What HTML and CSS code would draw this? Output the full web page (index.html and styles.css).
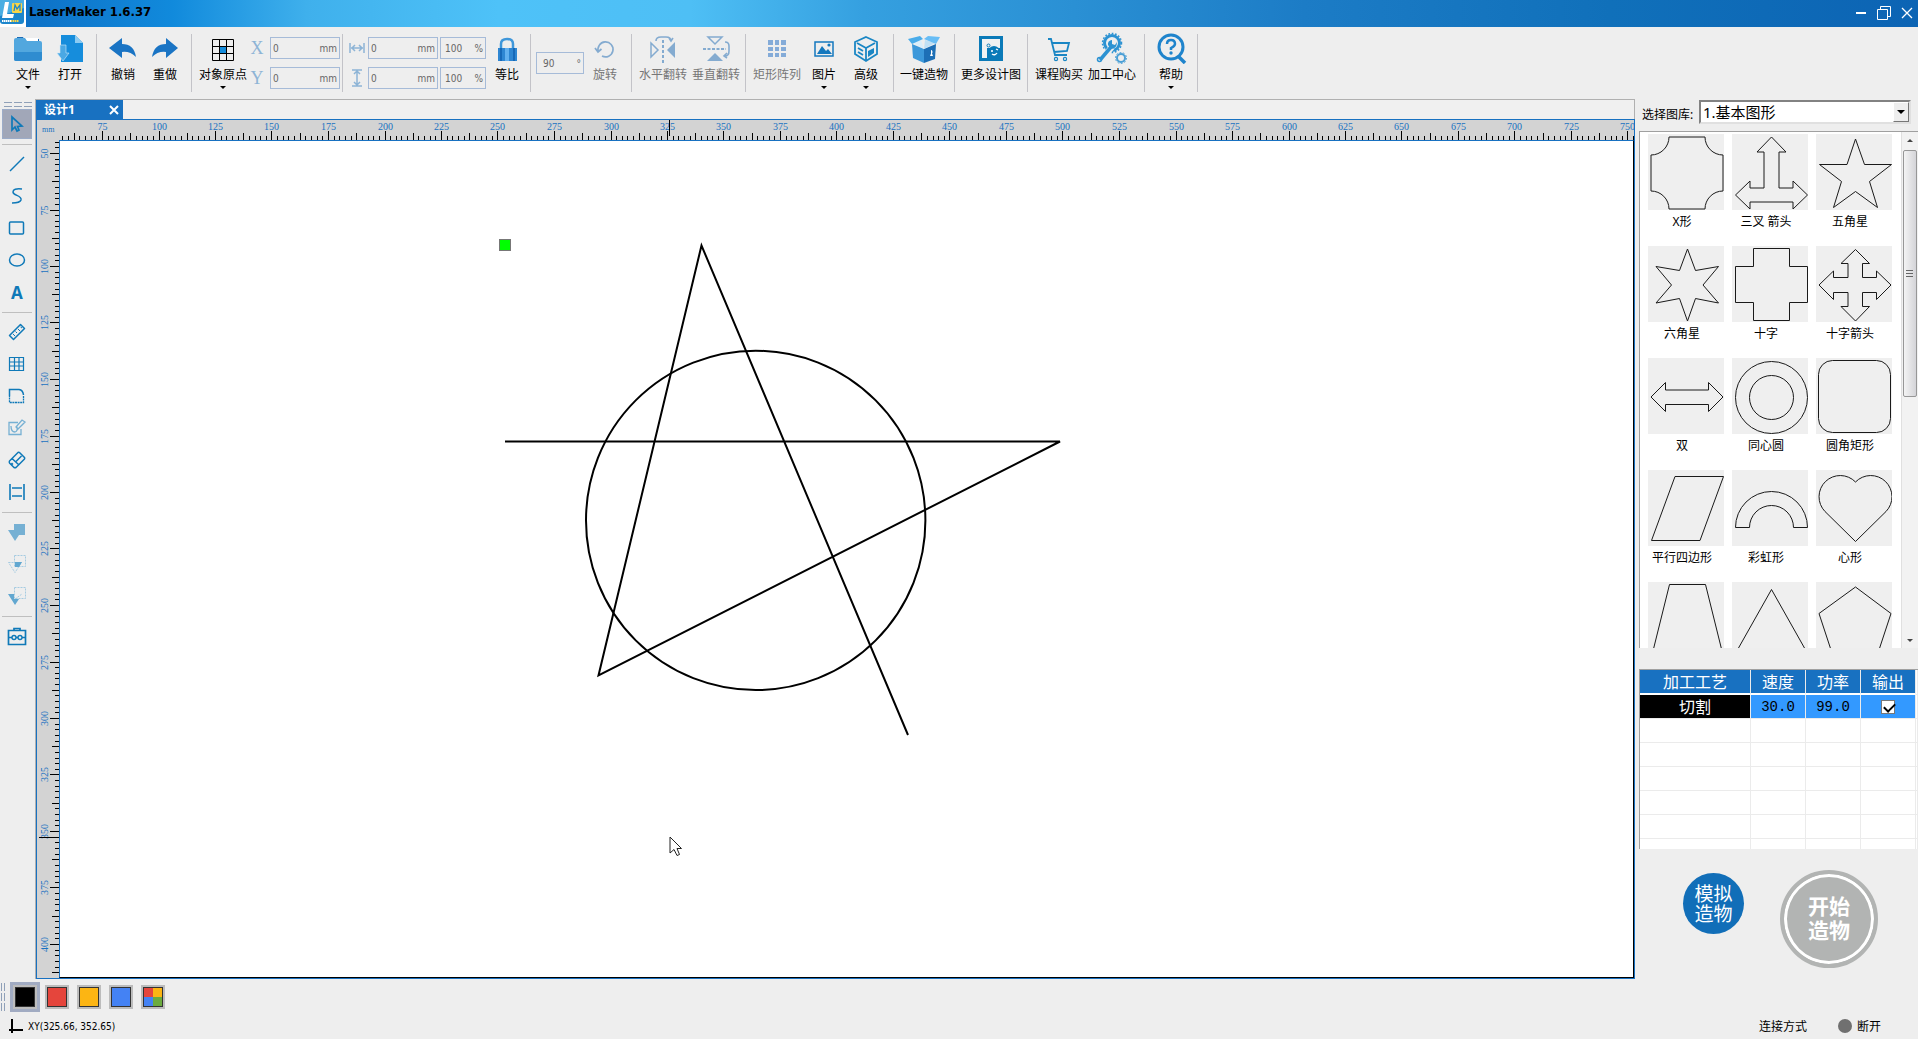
FILE: index.html
```html
<!DOCTYPE html>
<html lang="zh-CN">
<head>
  <meta charset="UTF-8">
  <meta name="viewport" content="width=device-width, initial-scale=1.0">
  <title>LaserMaker 1.6.37</title>
  <link rel="stylesheet" href="styles.css">
</head>
<body>

<!-- Title bar -->
<header class="title-bar">
  <svg class="app-logo" width="26" height="27" viewBox="0 0 26 27">
    <rect width="26" height="27" fill="#fff"/>
    <rect x="0" y="0" width="24" height="24" rx="3" fill="#1c86cc"/>
    <path d="M0 0H24V8L0 16Z" fill="#4aaee2"/>
    <path d="M5 2H9L7 14H14L13 18H2Z" fill="#fff"/>
    <rect x="12" y="3" width="10" height="10" rx="1" fill="#f8d548"/>
    <path d="M14 11L15 5L17 9L20 5V11" fill="none" stroke="#1c86cc" stroke-width="1.3"/>
    <path d="M2 21H11" stroke="#fff" stroke-width="2" stroke-dasharray="1.5 .5"/>
    <path d="M11 21H19" stroke="#f8d548" stroke-width="2" stroke-dasharray="1.5 .5"/>
  </svg>
  <h1 class="app-title">LaserMaker 1.6.37</h1>
  <div class="window-buttons">
    <button class="window-button" aria-label="最小化"><svg width="16" height="16" viewBox="0 0 16 16"><path d="M3 8H13" stroke="#fff" stroke-width="2"/></svg></button>
    <button class="window-button" aria-label="还原"><svg width="16" height="16" viewBox="0 0 16 16"><path d="M1.500 4.500H11.500V14.500H1.500ZM4.500 4V1.500H14.500V11.500H12" fill="none" stroke="#fff"/></svg></button>
    <button class="window-button" aria-label="关闭"><svg width="16" height="16" viewBox="0 0 16 16"><path d="M3 3L13 13M13 3L3 13" stroke="#fff" stroke-width="1.300"/></svg></button>
  </div>
</header>

<!-- Main toolbar -->
<div class="toolbar">
  <div class="group group-file">
    <button class="tool">
      <svg class="tool-icon" viewBox="0 0 32 32"><path d="M5 5H11L12 7H27V14H5Z" fill="#1a6cb8"/><path d="M13 6H26V12H14Z" fill="#fff"/><path d="M2 8Q2 6 4 6H13L15 9H28Q30 9 30 11V27Q30 29 28 29H4Q2 29 2 27Z" fill="#52a7de"/><path d="M2 20H30V27Q30 29 28 29H4Q2 29 2 27Z" fill="#2f8cd0"/></svg>
      <span>文件</span><i class="caret"></i>
    </button>
    <button class="tool">
      <svg class="tool-icon" viewBox="0 0 32 32"><path d="M7 3H21L29 11V30H7Z" fill="#168ddc"/><path d="M21 3L29 11H21Z" fill="#8bcbf2"/><path d="M6 13H12V21H15L9 29L3 21H6Z" fill="#4aa8e4" stroke="#cfe8f8" stroke-width=".6"/></svg>
      <span>打开</span>
    </button>
  </div>
  <div class="group">
    <button class="tool">
      <svg class="tool-icon" viewBox="0 0 32 32"><path d="M2 16L15 6V12Q27 12 29 25Q23 19 15 20V26Z" fill="#1a74c4"/></svg>
      <span>撤销</span>
    </button>
    <button class="tool">
      <svg class="tool-icon" viewBox="0 0 32 32"><path d="M29 16L17 6V12Q5 12 3 25Q9 19 17 20V26Z" fill="#1a74c4"/></svg>
      <span>重做</span>
    </button>
  </div>
  <div class="group group-origin">
    <button class="tool tool-wide">
      <svg class="tool-icon" viewBox="0 0 32 32"><path d="M13 14H20V21H13Z" fill="#168ddc"/><path d="M5.500 7.500H26.500V28.500H5.500ZM12.500 7V29M19.500 7V29M5 14.500H27M5 21.500H27" fill="none" stroke="#000"/></svg>
      <span>对象原点</span><i class="caret"></i>
    </button>
    <div class="fields">
      <label class="axis" for="posX">X</label>
      <div class="field"><input id="posX" type="text" value="0"><span>mm</span></div>
      <label class="axis" for="posY">Y</label>
      <div class="field"><input id="posY" type="text" value="0"><span>mm</span></div>
    </div>
  </div>
  <div class="group group-size">
    <div class="fields fields-size">
      <label class="axis" for="sizeW" aria-label="宽"><svg width="16" height="12" viewBox="0 0 16 12"><path d="M1 1V11M15 1V11M2 6H14M6 3L3 6L6 9M10 3L13 6L10 9" fill="none" stroke="#8db4d6" stroke-width="1.500"/></svg></label>
      <div class="field"><input id="sizeW" type="text" value="0"><span>mm</span></div>
      <div class="field field-percent"><input type="text" value="100" aria-label="宽度比例"><span>%</span></div>
      <label class="axis" for="sizeH" aria-label="高"><svg width="12" height="18" viewBox="0 0 12 18"><path d="M1 1H11M1 17H11M6 2V16M3 5L6 2L9 5M3 13L6 16L9 13" fill="none" stroke="#8db4d6" stroke-width="1.500"/></svg></label>
      <div class="field"><input id="sizeH" type="text" value="0"><span>mm</span></div>
      <div class="field field-percent"><input type="text" value="100" aria-label="高度比例"><span>%</span></div>
    </div>
    <button class="tool">
      <svg class="tool-icon" viewBox="0 0 32 32"><path d="M10 17V12Q10 7 16 7Q22 7 22 12V17" fill="none" stroke="#3f97da" stroke-width="2.500"/><rect x="7" y="16" width="19" height="13" fill="#2e86d2"/><path d="M10 16V29M23 16V29" stroke="#1769b8" stroke-width="2"/><path d="M16 16V29" stroke="#62b0ef" stroke-width="4"/></svg>
      <span>等比</span>
    </button>
  </div>
  <div class="group">
    <div class="field field-angle"><input type="text" value="90" aria-label="角度"><span>°</span></div>
    <button class="tool" disabled>
      <svg class="tool-icon" viewBox="0 0 32 32"><path d="M9.500 20A7.500 7.500 0 1 1 13 24M6 16L9 20L12.500 17" fill="none" stroke="#84abd0" stroke-width="1.700"/></svg>
      <span>旋转</span>
    </button>
  </div>
  <div class="group group-flip">
    <button class="tool tool-wide" disabled>
      <svg class="tool-icon" viewBox="0 0 32 32"><path d="M4 11L11 18L4 25Z" fill="none" stroke="#84abd0" stroke-width="1.500"/><path d="M28 10V26L20 18Z" fill="#84abd0"/><path d="M16 8V31" stroke="#84abd0" stroke-width="2" stroke-dasharray="3 2"/><path d="M9 9Q9 5 14 5H19Q24 5 24 9M22 6L24 9L26 6" fill="none" stroke="#84abd0" stroke-width="1.600"/></svg>
      <span>水平翻转</span>
    </button>
    <button class="tool tool-wide" disabled>
      <svg class="tool-icon" viewBox="0 0 32 32"><path d="M8 5H22L15 12Z" fill="none" stroke="#84abd0" stroke-width="1.500"/><path d="M15 21L23 29H7Z" fill="#84abd0"/><path d="M3 17H26" stroke="#84abd0" stroke-width="2" stroke-dasharray="3 1.500"/><path d="M25 10Q29 10 29 14V19Q29 24 25 24M27 21L24 24L27 26" fill="none" stroke="#84abd0" stroke-width="1.600"/></svg>
      <span>垂直翻转</span>
    </button>
  </div>
  <div class="group group-picture">
    <button class="tool tool-wide" disabled>
      <svg class="tool-icon" viewBox="0 0 32 32"><path d="M7 8H12V13H7ZM14 8H18V13H14ZM20 8H25V13H20ZM7 15H12V19H7ZM14 15H18V19H14ZM20 15H25V19H20ZM7 21H12V25H7ZM14 21H18V25H14ZM20 21H25V25H20Z" fill="#84abd8"/></svg>
      <span>矩形阵列</span>
    </button>
    <button class="tool">
      <svg class="tool-icon" viewBox="0 0 32 32"><rect x="7" y="10" width="18" height="14" fill="none" stroke="#1478be" stroke-width="1.500"/><path d="M9 22L14 14L18 19L20 17L24 22Z" fill="#1478be"/><circle cx="21" cy="13" r="1.600" fill="#1478be"/></svg>
      <span>图片</span><i class="caret"></i>
    </button>
    <button class="tool">
      <svg class="tool-icon" viewBox="0 0 32 32"><path d="M16 5L27 10V22L16 29L5 22V10Z M7 11L16 16L25 11M16 16V28M8 16L13 19M8 20L13 23" fill="none" stroke="#1a86c4" stroke-width="1.800"/><path d="M18 19L24 16V21L18 25Z" fill="#1a86c4"/></svg>
      <span>高级</span><i class="caret"></i>
    </button>
  </div>
  <div class="group group-make">
    <button class="tool tool-wide">
      <svg class="tool-icon" viewBox="0 0 32 32"><path d="M4 12L16 17V31L5 26Z" fill="#3c98da"/><path d="M16 17L28 12L27 27L16 31Z" fill="#1d6fb6"/><path d="M5 11L13 8L16 17Z" fill="#dbeefa"/><path d="M17 8L27 11L16 17Z" fill="#c0e0f5"/><path d="M0 7L12 4L15 7L4 12Z" fill="#4aacea"/><path d="M16 7L20 4L32 5L28 12Z" fill="#68bdf5"/><path d="M23 18A1.500 2 0 0 1 24 21.500L25 24H22L23 21.500Z" fill="#fff"/></svg>
      <span>一键造物</span>
    </button>
  </div>
  <div class="group">
    <button class="tool tool-long">
      <svg class="tool-icon" viewBox="0 0 32 32"><path d="M4 4H28V29H4Z" fill="#0b7ab8"/><path d="M7 7H25V16H12V26H7Z" fill="#f2f2f2"/><circle cx="19" cy="20" r="6" fill="#0b7ab8"/><circle cx="13.500" cy="13.500" r="1.500" fill="none" stroke="#0b7ab8"/><path d="M16 19H18M21 17L23 18M17 22Q20 24 22 21" fill="none" stroke="#fff" stroke-width="1.300"/></svg>
      <span>更多设计图</span>
    </button>
  </div>
  <div class="group group-course">
    <button class="tool tool-wide">
      <svg class="tool-icon" viewBox="0 0 32 32"><path d="M5 7H8L12 23H24M9 11H26L24 19L11 20" fill="none" stroke="#1a86c4" stroke-width="1.800"/><circle cx="13" cy="27" r="1.600" fill="none" stroke="#1a86c4" stroke-width="1.200"/><circle cx="22" cy="27" r="1.600" fill="none" stroke="#1a86c4" stroke-width="1.200"/></svg>
      <span>课程购买</span>
    </button>
    <button class="tool tool-wide">
      <svg class="tool-icon" viewBox="0 0 32 32"><circle cx="16" cy="11" r="7.500" fill="none" stroke="#2c92d2" stroke-width="3"/><circle cx="16" cy="11" r="9.500" fill="none" stroke="#2c92d2" stroke-width="1.500" stroke-dasharray="1.700 1.700"/><path d="M4 29L16 15" stroke="#eee" stroke-width="6"/><path d="M4 28L15 15" stroke="#2c92d2" stroke-width="3.500"/><path d="M12 13A4 4 0 0 1 16 8V12L19 13L21 10Q21 17 15 17Z" fill="#2c92d2"/><circle cx="3.500" cy="27.500" r="2" fill="none" stroke="#2c92d2" stroke-width="1.500"/><circle cx="25" cy="26" r="4" fill="none" stroke="#4a9fd6" stroke-width="2"/><circle cx="25" cy="26" r="5.500" fill="none" stroke="#4a9fd6" stroke-dasharray="1.800 1.600"/></svg>
      <span>加工中心</span>
    </button>
  </div>
  <div class="group">
    <button class="tool">
      <svg class="tool-icon" viewBox="0 0 32 32"><circle cx="16" cy="15" r="12" fill="none" stroke="#1f84cc" stroke-width="3"/><path d="M24 25L30 31" stroke="#1f84cc" stroke-width="3.500"/><path d="M12 12Q12 8 16 8Q20 8 20 12Q20 14 16 16V18" fill="none" stroke="#1f84cc" stroke-width="2.500"/><circle cx="16" cy="21" r="1.700" fill="#1f84cc"/></svg>
      <span>帮助</span><i class="caret"></i>
    </button>
  </div>
</div>

<main class="workspace">

  <!-- Drawing tools -->
  <nav class="side-tools">
    <div class="grip"></div>
    <button class="side-tool active" aria-label="选择"><svg viewBox="0 0 20 20"><path d="M5 3V16L8 13L10 17L12 16L10.500 12.500L15 12Z" fill="none" stroke="#0f79b8" stroke-width="1.700"/></svg></button>
    <hr>
    <button class="side-tool" aria-label="直线"><svg viewBox="0 0 20 20"><path d="M3 17L17 3" stroke="#0f79b8" stroke-width="1.500"/></svg></button>
    <button class="side-tool" aria-label="曲线"><svg viewBox="0 0 20 20"><path d="M15 3Q6 2 6 6C6 10 15 9 14 14Q13 17 5 17" fill="none" stroke="#0f79b8" stroke-width="1.500"/></svg></button>
    <button class="side-tool" aria-label="矩形"><svg viewBox="0 0 20 20"><rect x="2.500" y="4" width="14" height="12" rx="1" fill="none" stroke="#0f79b8" stroke-width="1.500"/></svg></button>
    <button class="side-tool" aria-label="椭圆"><svg viewBox="0 0 20 20"><ellipse cx="10" cy="10" rx="7.500" ry="6" fill="none" stroke="#0f79b8" stroke-width="1.500"/></svg></button>
    <button class="side-tool side-text" aria-label="文字">A</button>
    <hr>
    <button class="side-tool" aria-label="测量"><svg viewBox="0 0 20 20"><path d="M2.500 13.500L13.500 2.500L17.500 6.500L6.500 17.500Z" fill="none" stroke="#0f79b8" stroke-width="1.500" stroke-linejoin="round"/><path d="M6 12L8 14M8.500 9.500L10 11M11 7L13 9M13.500 5L15 6" stroke="#0f79b8"/></svg></button>
    <button class="side-tool" aria-label="网格"><svg viewBox="0 0 20 20"><path d="M2.500 3.500H16.500V16.500H2.500ZM7.500 3V17M12 3V17M2 8H17M2 12H17" fill="none" stroke="#0f79b8" stroke-width="1.200"/></svg></button>
    <button class="side-tool" aria-label="圆角"><svg viewBox="0 0 20 20"><path d="M16.500 10V16.500H2.500V10" fill="none" stroke="#0f79b8" stroke-width="1.300" stroke-dasharray="2 .6"/><path d="M2.500 10V3.500H12Q16 4 16.500 9" fill="none" stroke="#0f79b8" stroke-width="1.500"/></svg></button>
    <button class="side-tool" aria-label="编辑"><svg viewBox="0 0 20 20"><path d="M11 4.500H2V16.500H14V11M4 8Q4 14 8 14Q11 13 10 9M9 9L15 2L18 4L11 11Z" fill="none" stroke="#76b0d3" stroke-width="1.300"/></svg></button>
    <button class="side-tool" aria-label="擦除"><svg viewBox="0 0 20 20"><path d="M2.500 11L11 2.500Q12 2 13 3L17.500 7.500Q18 8 17.500 9L9 17.500Q8 18 7 17.500L2.500 13Q2 12 2.500 11ZM5 8.500L12 15M8.500 12L14.500 6M6 14.500L4.500 13" fill="none" stroke="#0f79b8" stroke-width="1.500" stroke-linejoin="round"/></svg></button>
    <button class="side-tool" aria-label="间距"><svg viewBox="0 0 20 20"><path d="M3 2V18M17 2V18M5 6H15M5 14H15" stroke="#0f79b8" stroke-width="1.600"/></svg></button>
    <hr>
    <button class="side-tool" aria-label="并集"><svg viewBox="0 0 20 20"><path d="M7 2H18V13H12L8 19L1 8H7Z" fill="#76b0d3"/></svg></button>
    <button class="side-tool" aria-label="交集"><svg viewBox="0 0 20 20"><path d="M7.500 1.500H18.500V12.500H7.500ZM1.500 8.500H14.500L8 18.500Z" fill="none" stroke="#a5cbe1" stroke-dasharray="2 1"/><path d="M8 8H15L12 13H8Z" fill="#62a7d0"/></svg></button>
    <button class="side-tool" aria-label="差集"><svg viewBox="0 0 20 20"><path d="M7.500 1.500H18.500V12.500H7.500ZM8 13L15 8" fill="none" stroke="#a5cbe1" stroke-dasharray="2 1"/><path d="M1 8H7V13H12L8 19Z" fill="#62a7d0"/></svg></button>
    <hr>
    <button class="side-tool" aria-label="工具箱"><svg viewBox="0 0 20 20"><path d="M1.500 4.500H18.500V18.500H1.500ZM7 4V2.500H13V4M2 11.500H5M9 11.500H11M15 11.500H18" fill="none" stroke="#0f79b8" stroke-width="1.700"/><circle cx="7" cy="11.500" r="2" fill="none" stroke="#0f79b8" stroke-width="1.400"/><circle cx="13" cy="11.500" r="2" fill="none" stroke="#0f79b8" stroke-width="1.400"/></svg></button>
  </nav>

  <!-- Document -->
  <section class="document">
    <div class="tabs">
      <div class="tab"><span>设计1</span>
        <button class="tab-close" aria-label="关闭"><svg width="10" height="10" viewBox="0 0 10 10"><path d="M1 1L9 9M9 1L1 9" stroke="#fff" stroke-width="2"/></svg></button>
      </div>
    </div>
    <div class="sheet">
      <div class="unit">mm</div>
      <svg class="ruler" id="rulerTop"></svg>
      <svg class="ruler" id="rulerLeft"></svg>
      <div class="canvas">
        <svg class="drawing">
          <polyline points="445,300.500 1000,300.500 538.500,534.500 641.500,104.500 848,594"/>
          <circle cx="695.700" cy="379.400" r="169.700"/>
          <rect class="handle" x="439.500" y="98.500" width="11" height="11"/>
          <path class="pointer" d="M610 696V712L614 708.500L617 714.500L619.500 713.500L617 707.500H621.500Z"/>
        </svg>
      </div>
    </div>
  </section>

  <!-- Right panel -->
  <aside class="panel">
    <div class="library-head">
      <label for="library">选择图库:</label>
      <div class="select-box">
        <select id="library"><option>1.基本图形</option></select>
        <i class="select-arrow"></i>
      </div>
    </div>

    <div class="library">
      <ul class="shapes">
        <li><svg viewBox="0 0 76 76"><path d="M21 3H57A18 18 0 0 0 75 21V57A18 18 0 0 0 57 75H21A18 18 0 0 0 3 57V21A18 18 0 0 0 21 3Z"/></svg><span>X形</span></li>
        <li><svg viewBox="0 0 76 76"><path d="M39.500 3L54 18H47V54H61V47L75.500 61L61 75V68H18V75L3.500 61L18 47V54H32V18H25Z"/></svg><span>三叉 箭头</span></li>
        <li><svg viewBox="0 0 76 76"><path d="M39.500 5L48.500 30.500H75.500L53.500 47.500L61.500 73.500L39.500 57.500L17.500 73.500L25.500 47.500L3.500 30.500H31Z"/></svg><span>五角星</span></li>
        <li><svg viewBox="0 0 76 76"><path d="M39.500 3L47.500 24.500L70.500 20.500L55 39L70.500 57L47.500 52.500L39.500 75L31.500 52.500L8 57L23.500 39L8 20.500L31.500 24.500Z"/></svg><span>六角星</span></li>
        <li><svg viewBox="0 0 76 76"><path d="M21.500 2.500H57.500V20.500H75.500V56.500H57.500V74.500H21.500V56.500H3.500V20.500H21.500Z"/></svg><span>十字</span></li>
        <li><svg viewBox="0 0 76 76"><path d="M39.500 3.500L53.500 17.500H46.500V31.500H60.500V25L75 39L60.500 53.500V46.500H46.500V60.500H53.500L39.500 75L25 60.500H32V46.500H17.500V53.500L3 39L17.500 25V31.500H32V17.500H25Z"/></svg><span>十字箭头</span></li>
        <li><svg viewBox="0 0 76 76"><path d="M3 39L17.500 24.500V32H60.500V24.500L75 39L60.500 53.500V46.500H17.500V53.500Z"/></svg><span>双</span></li>
        <li><svg viewBox="0 0 76 76"><circle cx="39.500" cy="39.500" r="36"/><circle cx="39.500" cy="39.500" r="22"/></svg><span>同心圆</span></li>
        <li><svg viewBox="0 0 76 76"><rect x="2.500" y="2.500" width="72" height="72" rx="14"/></svg><span>圆角矩形</span></li>
        <li><svg viewBox="0 0 76 76"><path d="M27 6.500H75.500L52 70.500H3.500Z"/></svg><span>平行四边形</span></li>
        <li><svg viewBox="0 0 76 76"><path d="M3.500 57.500A36 36 0 0 1 75.500 57.500H61.500A22 22 0 0 0 17.500 57.500Z"/></svg><span>彩虹形</span></li>
        <li><svg viewBox="0 0 76 76"><path d="M39.500 12A21 21 0 0 0 9 41.500L39.500 71.500L70 41.500A21 21 0 0 0 39.500 12Z"/></svg><span>心形</span></li>
        <li><svg viewBox="0 0 76 76" aria-label="梯形"><path d="M21.500 2.500H57.500L75.500 75H3.500Z"/></svg></li>
        <li><svg viewBox="0 0 76 76" aria-label="三角形"><path d="M39.500 7.500L77 74H2Z"/></svg></li>
        <li><svg viewBox="0 0 76 76" aria-label="五边形"><path d="M39.500 5L75 31.500L61 74H17L3 31.500Z"/></svg></li>
      </ul>
      <div class="scrollbar">
        <i class="arrow-up"></i>
        <div class="thumb"><i></i></div>
        <i class="arrow-down"></i>
      </div>
    </div>

    <div class="layers">
      <table>
        <colgroup><col class="col-name"><col class="col-value"><col class="col-value"><col class="col-value"><col></colgroup>
        <thead>
          <tr><th>加工工艺</th><th>速度</th><th>功率</th><th>输出</th><td></td></tr>
        </thead>
        <tbody>
          <tr class="selected"><td class="craft">切割</td><td class="value">30.0</td><td class="value">99.0</td><td class="value"><input type="checkbox" checked aria-label="输出"></td><td></td></tr>
          <tr><td></td><td></td><td></td><td></td><td></td></tr>
          <tr><td></td><td></td><td></td><td></td><td></td></tr>
          <tr><td></td><td></td><td></td><td></td><td></td></tr>
          <tr><td></td><td></td><td></td><td></td><td></td></tr>
          <tr><td></td><td></td><td></td><td></td><td></td></tr>
          <tr><td></td><td></td><td></td><td></td><td></td></tr>
        </tbody>
      </table>
    </div>

    <div class="actions">
      <button class="simulate">模拟<br>造物</button>
      <button class="start">开始<br>造物</button>
    </div>
  </aside>
</main>

<!-- Color palette -->
<div class="palette">
  <div class="palette-grip"></div>
  <button class="swatch active" aria-label="黑色"><i class="black"></i></button>
  <button class="swatch" aria-label="红色"><i class="red"></i></button>
  <button class="swatch" aria-label="黄色"><i class="yellow"></i></button>
  <button class="swatch" aria-label="蓝色"><i class="blue"></i></button>
  <button class="swatch" aria-label="更多颜色"><i class="multi"></i></button>
</div>

<!-- Status bar -->
<footer class="status">
  <svg width="16" height="16" viewBox="0 0 16 16"><path d="M4 1V15M1 12H15" stroke="#000" stroke-width="2"/></svg>
  <span class="coords">XY(325.66, 352.65)</span>
  <span>连接方式</span>
  <i class="dot"></i>
  <span>断开</span>
</footer>

<script src="script.js"></script>
</body>
</html>
```

FILE: styles.css
```css
* {
  box-sizing: border-box;
}
body {
  margin: 0;
  height: 100vh;
  display: flex;
  flex-direction: column;
  overflow: hidden;
  background-color: #eeeeee;
  color: #000;
  font-family: "Noto Sans", "Noto Sans CJK SC", sans-serif;
  font-size: 12px;
}
button {
  border: none;
  padding: 0;
  background: none;
  color: inherit;
  font-family: inherit;
  font-size: inherit;
}
svg {
  display: block;
}

/* Title bar */
.title-bar {
  flex: none;
  display: flex;
  height: 27px;
  background: linear-gradient(90deg, #0d6cc2 0%, #118adc 9%, #3fb0ec 16%, #4ec2f8 26%, #4ebff5 36%, #35a0e0 45%, #2a90d4 56%, #1c7cc6 68%, #1070ba 84%, #0c64b4 100%);
}
.app-title {
  flex: 1;
  margin: 0 0 0 3px;
  font-family: "DejaVu Sans Condensed", "Noto Sans", sans-serif;
  font-size: 13px;
  line-height: 24px;
}
.window-buttons {
  display: flex;
  gap: 7px;
  padding-right: 3px;
}
.window-button {
  width: 16px;
  height: 26px;
}

/* Main toolbar */
.toolbar {
  flex: none;
  display: flex;
  height: 72px;
  padding: 7px 0;
}
.group {
  display: flex;
  align-items: center;
  padding: 0 5px;
  border-right: 1px solid #c3c3c8;
}
.group-file {
  padding-left: 7px;
}
.group-origin {
  padding-right: 2px;
}
.group-size {
  padding-right: 2px;
}
.group-flip {
  gap: 1px;
  padding-right: 3px;
}
.group-picture {
  padding-right: 6px;
}
.group-make {
  padding: 0 4px;
}
.group-course {
  gap: 1px;
  padding-right: 6px;
}
.tool {
  display: flex;
  flex-direction: column;
  align-items: center;
  width: 42px;
  height: 62px;
  line-height: 18px;
  white-space: nowrap;
}
.tool:disabled {
  color: #777;
}
.tool-wide {
  width: 52px;
}
.tool-long {
  width: 62px;
}
.tool-icon {
  width: 32px;
  height: 32px;
  margin-bottom: 2px;
}
.caret {
  margin-top: 2px;
  border: 3px solid transparent;
  border-top-color: #000;
  border-bottom: none;
}
.fields {
  display: grid;
  grid-template-columns: 16px 70px;
  gap: 8px 5px;
}
.fields-size {
  grid-template-columns: 18px 70px 46px;
  gap: 8px 2px;
}
.axis {
  display: flex;
  align-items: center;
  justify-content: center;
  color: #8db4d6;
  font-family: "Liberation Serif", serif;
  font-size: 18px;
  line-height: 22px;
}
.field {
  display: flex;
  align-items: center;
  height: 22px;
  padding: 0 2px;
  border: 1px solid #a6bbd8;
  color: #666;
  font-family: "DejaVu Sans Condensed", "Noto Sans", sans-serif;
  font-size: 10px;
}
.field-percent {
  padding-left: 4px;
}
.field-angle {
  width: 48px;
  padding-left: 6px;
}
.field input {
  flex: 1;
  min-width: 0;
  padding: 0;
  border: none;
  background: none;
  color: inherit;
  font-family: inherit;
  font-size: inherit;
}

/* Workspace */
.workspace {
  flex: 1;
  display: flex;
  min-height: 0;
}
.side-tools {
  flex: none;
  display: flex;
  flex-direction: column;
  gap: 2px;
  width: 35px;
  padding: 3px 3px 0 2px;
}
.grip {
  height: 5px;
  margin: 0 0 0 2px;
  border: solid #8fa0b8;
  border-width: 1px 0;
  -webkit-mask: repeating-linear-gradient(90deg, #000 0 8px, transparent 8px 10px);
  mask: repeating-linear-gradient(90deg, #000 0 8px, transparent 8px 10px);
}
.side-tool {
  flex: none;
  display: flex;
  align-items: center;
  justify-content: center;
  height: 30px;
}
.side-tool svg {
  width: 20px;
  height: 20px;
}
.side-tool.active {
  border: 1px solid #9cacc8;
  background-color: #a1a7b8;
}
.side-text {
  color: #0f79b8;
  font-size: 17px;
  font-weight: bold;
}
.side-tools hr {
  width: 100%;
  height: 1px;
  margin: 3px 0 2px;
  border: none;
  background-color: #bfbfbf;
}

/* Document */
.document {
  flex: 1;
  display: flex;
  flex-direction: column;
  min-width: 0;
  border-top: 1px solid #b0b0b0;
  border-left: 1px solid #b0b0b0;
}
.tabs {
  display: flex;
  height: 19px;
  background-color: #f0f0f0;
  border-right: 1px solid #b0b0b0;
}
.tab {
  display: flex;
  align-items: center;
  justify-content: space-between;
  width: 87px;
  padding: 0 4px 0 8px;
  background-color: #1871c1;
  color: #fff;
  font-weight: bold;
  line-height: 18px;
}
.sheet {
  flex: 1;
  display: grid;
  grid-template-columns: 23px 1fr;
  grid-template-rows: 21px 1fr;
  min-height: 0;
  border: 1px solid #1871c1;
  background-color: #d3d3d3;
}
.unit {
  padding: 5px 0 0 5px;
  color: #1871c1;
  font-family: "Liberation Serif", serif;
  font-size: 8px;
}
.ruler {
  width: 100%;
  height: 100%;
  overflow: hidden;
}
.ruler line {
  stroke: #000;
  shape-rendering: crispEdges;
}
.ruler text {
  fill: #1871c1;
  font-family: "Liberation Serif", serif;
  font-size: 10px;
  text-anchor: middle;
}
.canvas {
  min-height: 0;
  border: solid #000;
  border-width: 1px;
  border-top-color: #1871c1;
  border-left-color: #1871c1;
  margin: -1px 0 0 -1px;
  background-color: #fff;
}
.drawing {
  width: 100%;
  height: 100%;
  fill: none;
  stroke: #000;
  stroke-width: 2;
}
.handle {
  fill: #00ff00;
  stroke: #777;
  stroke-width: 1;
}
.pointer {
  fill: #fff;
  stroke: #222;
  stroke-width: 1;
}

/* Right panel */
.panel {
  flex: none;
  display: flex;
  flex-direction: column;
  width: 283px;
  padding-left: 4px;
}
.library-head {
  display: flex;
  align-items: center;
  justify-content: space-between;
  height: 32px;
  padding: 1px 7px 7px 3px;
}
.library-head label {
  padding-top: 4px;
}
.select-box {
  position: relative;
  width: 212px;
}
.select-box select {
  display: block;
  width: 100%;
  height: 24px;
  padding: 0 20px 0 2px;
  appearance: none;
  border: 2px solid;
  border-color: #828282 #e0e0e0 #e0e0e0 #828282;
  border-radius: 0;
  background-color: #fff;
  color: #000;
  font-family: inherit;
  font-size: 15px;
}
.select-arrow {
  position: absolute;
  top: 2px;
  right: 2px;
  width: 16px;
  height: 20px;
  border: 1px solid;
  border-color: #fff #777 #777 #fff;
  background-color: #eee;
}
.select-arrow::after {
  content: "";
  position: absolute;
  top: 7px;
  left: 3px;
  border: 4px solid transparent;
  border-top-color: #000;
  border-bottom: none;
}
.library {
  flex: none;
  display: flex;
  height: 517px;
  border: solid #a0a0a0;
  border-width: 1px 0 0 1px;
  background-color: #fff;
  overflow: hidden;
}
.shapes {
  flex: 1;
  display: grid;
  grid-template-columns: repeat(3, 76px);
  grid-auto-rows: 104px;
  gap: 8px;
  margin: 0;
  padding: 2px 0 0 8px;
  list-style: none;
}
.shapes svg {
  width: 76px;
  height: 76px;
  background-color: #efefef;
  fill: none;
  stroke: #1a1a1a;
}
.shapes span {
  display: block;
  padding-right: 8px;
  line-height: 24px;
  text-align: center;
  white-space: nowrap;
}
.scrollbar {
  display: flex;
  flex-direction: column;
  align-items: center;
  width: 17px;
  padding: 7px 1px 6px 0;
  border-left: 1px solid #e0e0e0;
  background-color: #f2f2f2;
}
.arrow-up {
  border: 3px solid transparent;
  border-top: none;
  border-bottom-color: #444;
}
.arrow-down {
  margin-top: auto;
  border: 3px solid transparent;
  border-bottom: none;
  border-top-color: #444;
}
.thumb {
  display: flex;
  align-items: center;
  justify-content: center;
  width: 14px;
  height: 247px;
  margin-top: 8px;
  border: 1px solid #979797;
  border-radius: 2px;
  background: linear-gradient(90deg, #f4f4f4, #d4d4d8);
}
.thumb i {
  width: 7px;
  height: 8px;
  background: repeating-linear-gradient(#666 0 1px, transparent 1px 3px);
}

/* Layer table */
.layers {
  flex: none;
  height: 180px;
  margin-top: 21px;
  border-top: 1px solid #a0a0a0;
  border-left: 1px solid #a0a0a0;
  background-color: #fff;
  overflow: hidden;
}
.layers table {
  width: 100%;
  table-layout: fixed;
  border-collapse: separate;
  border-spacing: 0;
  font-size: 16px;
}
.col-name {
  width: 111px;
}
.col-value {
  width: 55px;
}
.layers td,
.layers th {
  height: 24px;
  padding: 0;
  border-right: 1px solid #ebebeb;
  border-bottom: 1px solid #ebebeb;
  font-weight: normal;
  line-height: 22px;
  text-align: center;
}
.layers th {
  height: 25px;
  border-bottom: 2px solid #fff;
  background-color: #1871c1;
  color: #fff;
}
.layers .value {
  background-color: #3399ff;
  font-family: "Liberation Mono", monospace;
  font-size: 14px;
}
.layers .craft {
  background-color: #000;
  color: #fff;
}
.layers input {
  appearance: none;
  display: block;
  width: 14px;
  height: 14px;
  margin: 0 auto;
  border: 1px solid #777;
  background-color: #fff;
}
.layers input:checked::after {
  content: "";
  display: block;
  width: 9px;
  height: 5px;
  margin: 2px 0 0 2px;
  border: solid #000;
  border-width: 0 0 2px 2px;
  transform: rotate(-45deg);
}

/* Start buttons */
.actions {
  display: flex;
  align-items: flex-start;
  gap: 36px;
  padding: 21px 0 0 44px;
}
.simulate {
  width: 61px;
  height: 61px;
  margin-top: 3px;
  border-radius: 50%;
  background-color: #116eb8;
  color: #fff;
  font-size: 19px;
  line-height: 20px;
}
.start {
  width: 98px;
  height: 98px;
  padding-bottom: 3px;
  border: 4px solid #b2b4b3;
  border-radius: 50%;
  background-color: #b2b4b3;
  box-shadow: inset 0 0 0 3px #fff;
  color: #fff;
  font-size: 21px;
  font-weight: bold;
  line-height: 24px;
}

/* Color palette */
.palette {
  flex: none;
  display: flex;
  align-items: center;
  gap: 8px;
  height: 36px;
  padding: 0 1px;
}
.palette-grip {
  width: 4px;
  height: 28px;
  border: solid #8fa0b8;
  border-width: 0 1px;
  -webkit-mask: repeating-linear-gradient(#000 0 8px, transparent 8px 10px);
  mask: repeating-linear-gradient(#000 0 8px, transparent 8px 10px);
}
.swatch {
  width: 24px;
  height: 24px;
  padding: 2px;
  background-color: #bcbcbc;
}
.swatch.active {
  outline: 3px solid #a1abc2;
}
.swatch i {
  display: block;
  height: 20px;
  border: 1px solid #333;
}
.black {
  background-color: #000;
}
.red {
  background-color: #e5453c;
}
.yellow {
  background-color: #fcb513;
}
.blue {
  background-color: #4482f4;
}
.multi {
  background: conic-gradient(#fcb513 0 25%, #6bab3e 25% 50%, #4482f4 50% 75%, #e5453c 75%);
}

/* Status bar */
.status {
  flex: none;
  display: flex;
  align-items: center;
  height: 24px;
  padding: 0 37px 2px 8px;
}
.coords {
  flex: 1;
  padding-left: 4px;
  font-family: "DejaVu Sans Condensed", "Noto Sans", sans-serif;
  font-size: 10px;
}
.dot {
  width: 14px;
  height: 14px;
  margin: 0 5px 0 31px;
  border-radius: 50%;
  background-color: #707070;
}
```

FILE: script.js
```js
var SVG_NS = 'http://www.w3.org/2000/svg';
var PX_PER_MM = 2.26;

function addLine(svg, x1, y1, x2, y2) {
  var line = document.createElementNS(SVG_NS, 'line');
  line.setAttribute('x1', x1);
  line.setAttribute('y1', y1);
  line.setAttribute('x2', x2);
  line.setAttribute('y2', y2);
  svg.appendChild(line);
}

function addText(svg, value, x, y, rotated) {
  var text = document.createElementNS(SVG_NS, 'text');
  text.textContent = value;
  if (rotated) {
    text.setAttribute('transform', 'translate(' + x + ' ' + y + ') rotate(-90)');
  } else {
    text.setAttribute('x', x);
    text.setAttribute('y', y);
  }
  svg.appendChild(text);
}

// start is the value in mm drawn at pixel offset
function drawRuler(svg, vertical, start, offset, cursor) {
  var box = svg.getBoundingClientRect();
  var length = vertical ? box.height : box.width;
  var edge = vertical ? box.width : box.height;

  for (var i = -20; ; i++) {
    var pos = Math.round(offset + i * 2.5 * PX_PER_MM) + 0.5;
    if (pos > length) break;
    if (pos < 1) continue;
    var major = i % 10 === 0;
    var size = major ? 10 : (i % 5 === 0 ? 8 : 5);
    if (vertical) {
      addLine(svg, edge - size, pos, edge, pos);
      if (major) addText(svg, start + i * 2.5, 11, pos, true);
    } else {
      addLine(svg, pos, edge - size, pos, edge);
      if (major) addText(svg, start + i * 2.5, pos, 10, false);
    }
  }

  // Mouse position
  if (vertical) {
    addLine(svg, 2, cursor, edge - 5, cursor);
  } else {
    addLine(svg, cursor, 0, cursor, edge - 5);
  }
}

drawRuler(document.getElementById('rulerTop'), false, 75, 42, 609.5);
drawRuler(document.getElementById('rulerLeft'), true, 50, 12, 696.5);
```
